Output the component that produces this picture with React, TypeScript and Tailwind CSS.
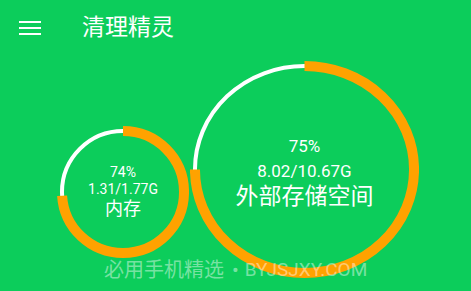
import React from "react";

const FONT = { fontFamily: 'Roboto, "Noto Sans CJK SC", sans-serif' };

interface RingProps {
  w: number;
  h: number;
  pct: number;
  children: React.ReactNode;
  className?: string;
}

function Ring({ w, h, pct, children, className }: RingProps) {
  const cx = w / 2;
  const cy = h / 2;
  const rx = cx - 5;
  const ry = cy - 5;
  const d = `M ${cx} ${cy - ry} A ${rx} ${ry} 0 1 1 ${cx} ${cy + ry} A ${rx} ${ry} 0 1 1 ${cx} ${cy - ry}`;
  return (
    <div className={`relative shrink-0 flex flex-col items-center justify-center ${className ?? ""}`} style={{ width: w, height: h }}>
      <svg className="absolute inset-0" width={w} height={h} viewBox={`0 0 ${w} ${h}`}>
        <path d={d} fill="none" stroke="#ffffff" strokeWidth={4} />
        <path d={d} fill="none" stroke="#ffa200" strokeWidth={10} pathLength={100} strokeDasharray={`${pct} 100`} />
      </svg>
      {children}
    </div>
  );
}

export default function App() {
  return (
    <div className="relative w-[471px] h-[291px] overflow-hidden bg-[#0ccd5b]" style={FONT}>
      <header className="h-[55px] flex items-center">
        <div className="ml-[19px] flex flex-col gap-[4px]">
          <div className="w-[22px] h-[2px] bg-white" />
          <div className="w-[22px] h-[2px] bg-white" />
          <div className="w-[22px] h-[2px] bg-white" />
        </div>
        <h1 className="ml-[41px] text-[23px] text-white leading-none">清理精灵</h1>
      </header>

      <div className="flex items-start pl-[57px]">
        <Ring w={132} h={132} pct={74} className="mt-[71px]">
          <div className="relative flex flex-col items-center text-white">
            <span className="text-[14px] leading-[17px]">74%</span>
            <span className="text-[14px] leading-[17px]">1.31/1.77G</span>
            <span className="text-[18px] leading-[22px]">内存</span>
          </div>
        </Ring>
        <Ring w={229} h={217} pct={75} className="ml-[1px] mt-[6px]">
          <div className="relative flex flex-col items-center pt-[4px] text-white">
            <span className="text-[17px] leading-[26px]">75%</span>
            <span className="text-[17px] leading-[24px]">8.02/10.67G</span>
            <span className="text-[23px] leading-[28px]">外部存储空间</span>
          </div>
        </Ring>
      </div>

      <div className="absolute left-[104px] top-[257px] flex items-center whitespace-nowrap text-white/45">
        <span className="text-[20px] leading-[26px]">必用手机精选</span>
        <span className="ml-[8px] text-[20px] leading-[26px]">•</span>
        <span className="ml-[6px] text-[19px] leading-[26px]">BYJSJXY.COM</span>
      </div>
    </div>
  );
}
